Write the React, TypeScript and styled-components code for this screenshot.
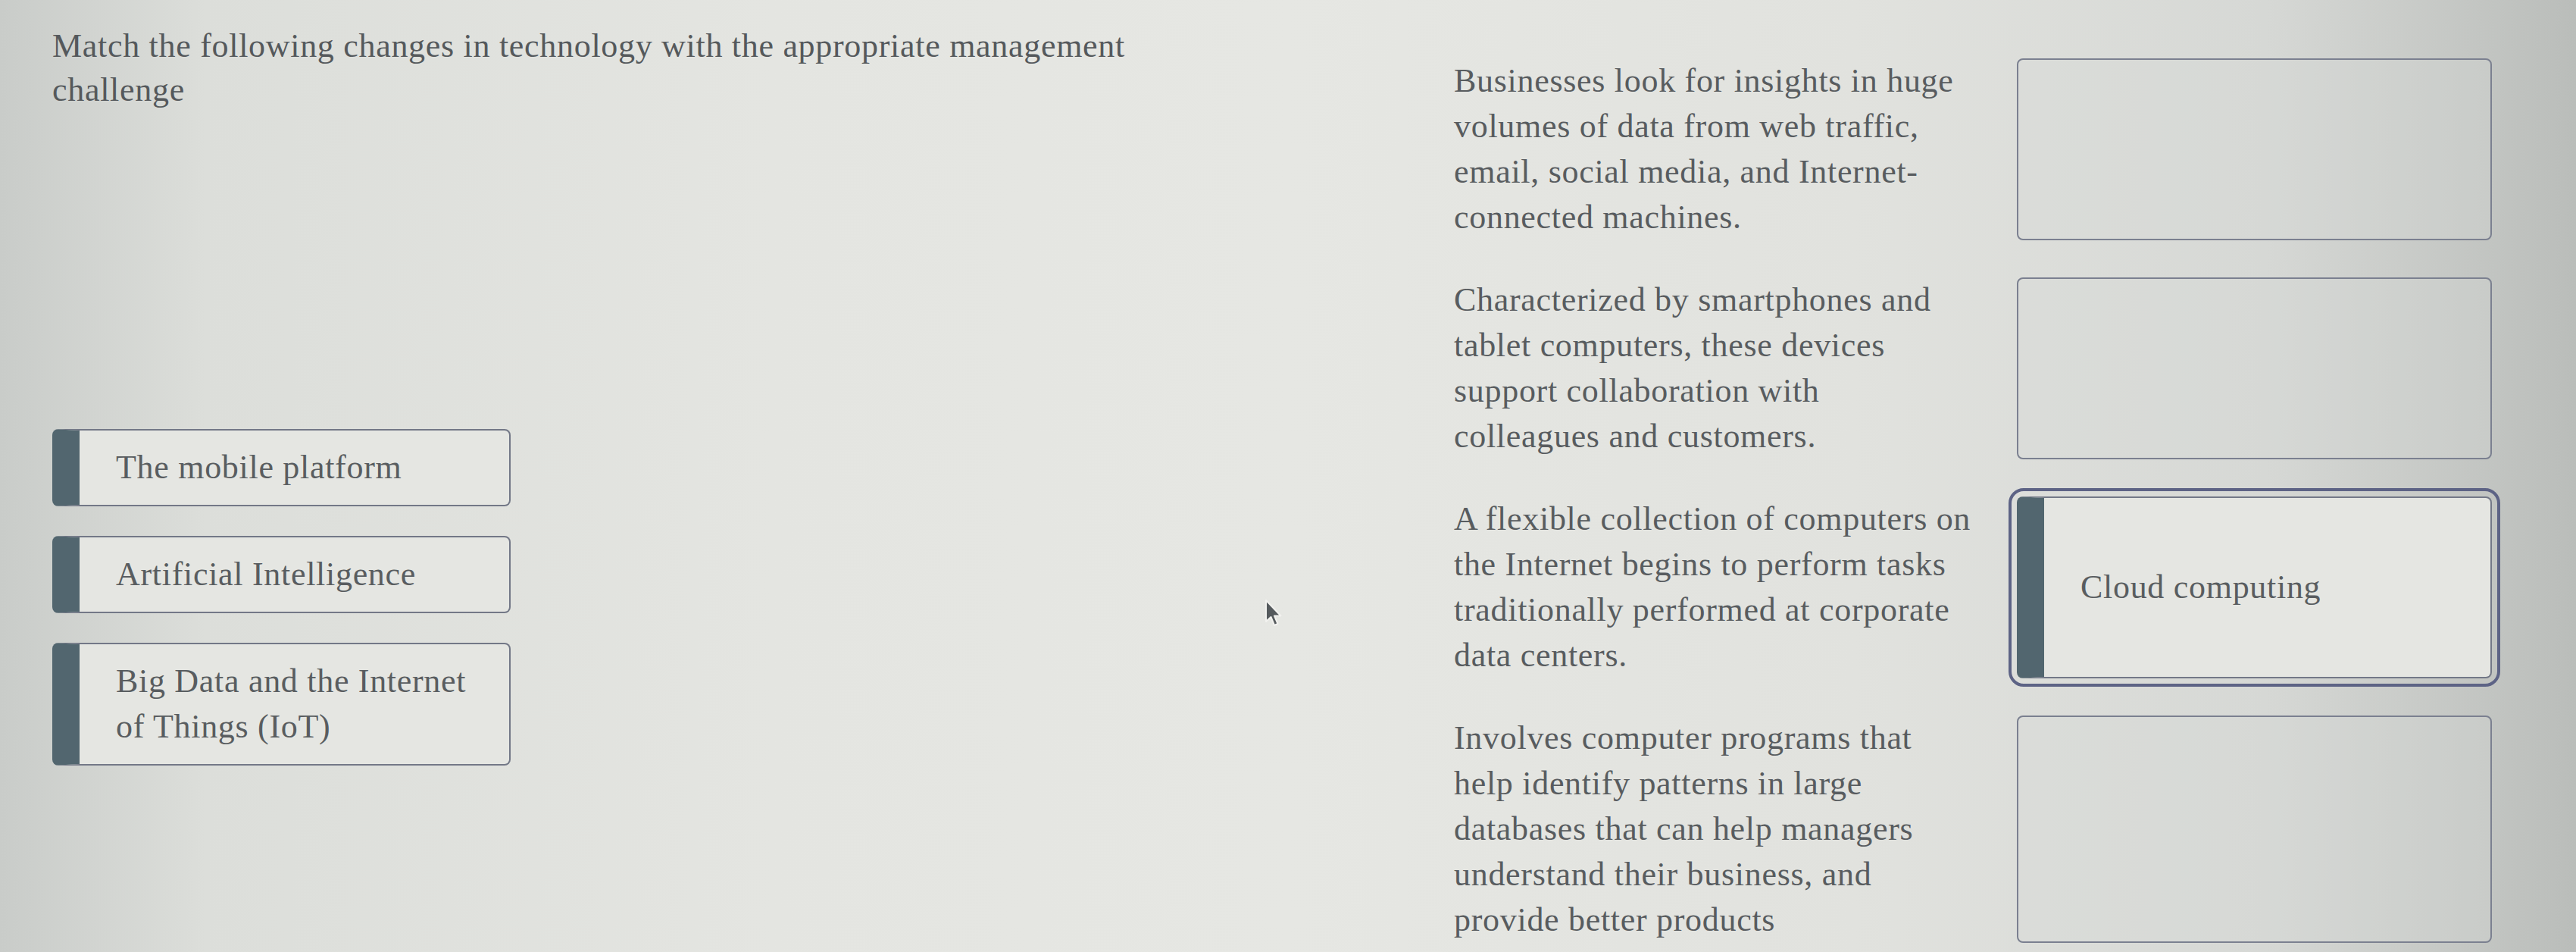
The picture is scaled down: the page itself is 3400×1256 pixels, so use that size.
import styled, { createGlobalStyle } from "styled-components";

const GlobalStyle = createGlobalStyle`
  html, body {
    margin: 0;
    padding: 0;
  }
  body {
    width: 3400px;
    height: 1256px;
    overflow: hidden;
    font-family: "Liberation Serif", "Times New Roman", serif;
    background: linear-gradient(
      90deg,
      #c9ccc9 0%,
      #dcdeda 8%,
      #e4e5e1 30%,
      #e6e7e3 50%,
      #e1e2de 72%,
      #d6d8d5 88%,
      #babdba 100%
    );
    color: #575b5e;
  }
`;

const Page = styled.div`
  position: relative;
  display: flex;
  width: 3400px;
  height: 1256px;
  font-size: 44px;
  letter-spacing: 0.7px;
`;

const LeftPane = styled.div`
  width: 1919px;
  box-sizing: border-box;
  padding: 32px 0 0 69px;
`;

const Title = styled.div`
  max-width: 1480px;
  line-height: 58px;
  color: #55595c;
`;

const ChoiceList = styled.div`
  display: flex;
  flex-direction: column;
  gap: 39px;
  width: 605px;
  margin-top: 418px;
`;

const Card = styled.div<{ $grow?: boolean }>`
  display: flex;
  align-items: center;
  box-sizing: border-box;
  ${(p) => (p.$grow ? "flex: 1;" : "")}
  padding: 19px 40px 19px 48px;
  border: 2px solid #737887;
  border-left: 36px solid #52666f;
  border-radius: 8px;
  background: #e5e6e2;
  line-height: 60px;
  color: #595d60;
`;

const RightPane = styled.div`
  display: flex;
  flex-direction: column;
  gap: 49px;
  padding-top: 77px;
`;

const MatchRow = styled.div`
  display: grid;
  grid-template-columns: 720px 627px;
  column-gap: 23px;
  align-items: stretch;
`;

const Prompt = styled.div`
  line-height: 60px;
  color: #585c5f;
  white-space: nowrap;
`;

const DropZone = styled.div<{ $filled?: boolean }>`
  display: flex;
  box-sizing: border-box;
  min-height: 236px;
  border-radius: 8px;
  ${(p) =>
    p.$filled
      ? `
    outline: 4px solid #5d6385;
    outline-offset: 7px;
    border-radius: 9px;
  `
      : `
    border: 2px solid #7b8090;
    background: rgba(215, 217, 214, 0.35);
  `}
`;

const Cursor = styled.svg`
  position: absolute;
  left: 1668px;
  top: 790px;
  width: 26px;
  height: 40px;
`;

const Lines = ({ lines }: { lines: string[] }) => (
  <>
    {lines.map((l, i) => (
      <span key={i}>
        {l}
        {i < lines.length - 1 && <br />}
      </span>
    ))}
  </>
);

const choices: string[][] = [
  ["The mobile platform"],
  ["Artificial Intelligence"],
  ["Big Data and the Internet", "of Things (IoT)"],
];

const prompts: { lines: string[]; answer?: string }[] = [
  {
    lines: [
      "Businesses look for insights in huge",
      "volumes of data from web traffic,",
      "email, social media, and Internet-",
      "connected machines.",
    ],
  },
  {
    lines: [
      "Characterized by smartphones and",
      "tablet computers, these devices",
      "support collaboration with",
      "colleagues and customers.",
    ],
  },
  {
    lines: [
      "A flexible collection of computers on",
      "the Internet begins to perform tasks",
      "traditionally performed at corporate",
      "data centers.",
    ],
    answer: "Cloud computing",
  },
  {
    lines: [
      "Involves computer programs that",
      "help identify patterns in large",
      "databases that can help managers",
      "understand their business, and",
      "provide better products",
    ],
  },
];

export default function App() {
  return (
    <>
      <GlobalStyle />
      <Page>
        <LeftPane>
          <Title>
            <Lines
              lines={[
                "Match the following changes in technology with the appropriate management",
                "challenge",
              ]}
            />
          </Title>
          <ChoiceList>
            {choices.map((c) => (
              <Card key={c.join(" ")}>
                <div>
                  <Lines lines={c} />
                </div>
              </Card>
            ))}
          </ChoiceList>
        </LeftPane>
        <RightPane>
          {prompts.map((p) => (
            <MatchRow key={p.lines[0]}>
              <Prompt>
                <Lines lines={p.lines} />
              </Prompt>
              <DropZone $filled={!!p.answer}>
                {p.answer && <Card $grow>{p.answer}</Card>}
              </DropZone>
            </MatchRow>
          ))}
        </RightPane>
        <Cursor viewBox="0 0 26 40">
          <path
            d="M3 2 L3 30 L9.5 24 L14 35 L18.5 33 L14 22.5 L22.5 22.5 Z"
            fill="#555a5d"
            stroke="#f2f2ef"
            strokeWidth="2"
            strokeLinejoin="round"
          />
        </Cursor>
      </Page>
    </>
  );
}
